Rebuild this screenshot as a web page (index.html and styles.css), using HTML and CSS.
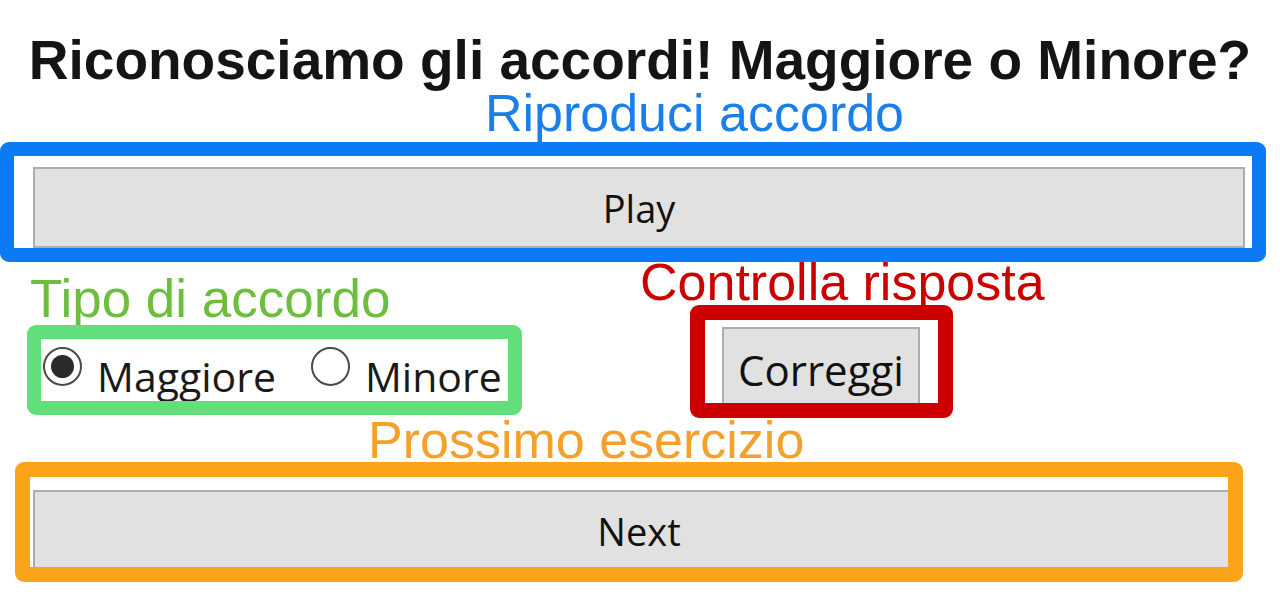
FILE: index.html
```html
<!DOCTYPE html>
<html lang="it">
<head>
<meta charset="utf-8">
<title>Riconosciamo gli accordi</title>
<link rel="stylesheet" href="styles.css">
</head>
<body>
<main class="page">
  <h1 class="title">Riconosciamo gli accordi! Maggiore o Minore?</h1>

  <section class="group">
    <div class="note note-blue">Riproduci accordo</div>
    <div class="frame frame-blue">
      <button class="btn btn-wide" type="button">Play</button>
    </div>
  </section>

  <div class="row">
    <section class="col col-type">
      <div class="note note-green">Tipo di accordo</div>
      <div class="frame frame-green">
        <label class="choice"><span class="radio radio-on"></span><span class="choice-text">Maggiore</span></label>
        <label class="choice"><span class="radio"></span><span class="choice-text">Minore</span></label>
      </div>
    </section>
    <section class="col col-check">
      <div class="note note-red">Controlla risposta</div>
      <div class="frame frame-red">
        <button class="btn btn-check" type="button">Correggi</button>
      </div>
    </section>
  </div>

  <section class="group">
    <div class="note note-orange">Prossimo esercizio</div>
    <div class="frame frame-orange">
      <button class="btn btn-wide" type="button">Next</button>
    </div>
  </section>
</main>
</body>
</html>
```

FILE: styles.css
```css
* { box-sizing: border-box; }

html, body {
  margin: 0;
  padding: 0;
  background: #ffffff;
}

body {
  width: 1280px;
  height: 601px;
  overflow: hidden;
  font-family: "Liberation Sans", Arial, sans-serif;
}

.page {
  display: flex;
  flex-direction: column;
  padding-top: 33px;
}

.title {
  margin: 0;
  font-family: "Liberation Sans", Arial, sans-serif;
  font-weight: 700;
  font-size: 55px;
  line-height: 55px;
  color: #141414;
  text-align: center;
}

.note {
  font-family: "Liberation Sans", Arial, sans-serif;
  font-size: 52px;
  line-height: 47px;
  white-space: nowrap;
}

.note-blue {
  margin-top: 2px;
  padding-left: 109px;
  text-align: center;
  color: #1a7fea;
}

.note-green {
  margin-top: 13px;
  padding-left: 30px;
  font-size: 53px;
  color: #6cbf3e;
}

.note-red {
  margin-top: -3px;
  color: #cc0000;
}

.note-orange {
  margin-top: -1px;
  padding-left: 368px;
  color: #f4a12c;
}

.frame {
  border-style: solid;
  border-width: 14px;
  border-radius: 9px;
  background: #ffffff;
  overflow: hidden;
  display: flex;
}

.frame-blue {
  margin-top: 5px;
  width: 1266px;
  height: 120px;
  border-color: #0b7bf5;
  padding: 11px 0 0 19px;
}

.row {
  display: flex;
  align-items: flex-start;
}

.col {
  display: flex;
  flex-direction: column;
}

.col-type {
  width: 640px;
}

.frame-green {
  margin-top: 3px;
  margin-left: 27px;
  width: 495px;
  height: 90px;
  border-color: #62df7b;
  padding-left: 2px;
  align-items: flex-start;
  gap: 35px;
}

.choice {
  display: flex;
  align-items: flex-start;
  gap: 15px;
}

.radio {
  position: relative;
  margin-top: 8px;
  width: 39px;
  height: 39px;
  border-radius: 50%;
  border: 2px solid #4a4a4a;
  background: #ffffff;
  flex: none;
}

.radio-on::after {
  content: "";
  position: absolute;
  left: 6px;
  top: 6px;
  width: 23px;
  height: 23px;
  border-radius: 50%;
  background: #2b2b2b;
}

.choice-text {
  margin-top: 17px;
  font-family: "Open Sans", "Noto Sans", sans-serif;
  font-size: 41px;
  line-height: 41px;
  color: #1a1a1a;
}

.frame-red {
  margin-top: -1px;
  margin-left: 50px;
  width: 263px;
  height: 113px;
  border-width: 15px;
  border-color: #cc0000;
  padding: 7px 0 0 17px;
}

.frame-orange {
  margin-top: -2px;
  margin-left: 15px;
  width: 1228px;
  height: 120px;
  border-width: 15px;
  border-color: #fba419;
  padding: 13px 0 0 3px;
}

.btn {
  flex: none;
  display: flex;
  align-items: center;
  justify-content: center;
  margin: 0;
  padding: 0;
  background: #e1e1e1;
  border: 2px solid #adadad;
  border-radius: 0;
  font-family: "Open Sans", "Noto Sans", sans-serif;
  color: #111111;
}

.btn-wide {
  width: 1212px;
  height: 81px;
  font-size: 38px;
}

.btn-check {
  width: 198px;
  height: 84px;
  font-size: 42px;
}
```
